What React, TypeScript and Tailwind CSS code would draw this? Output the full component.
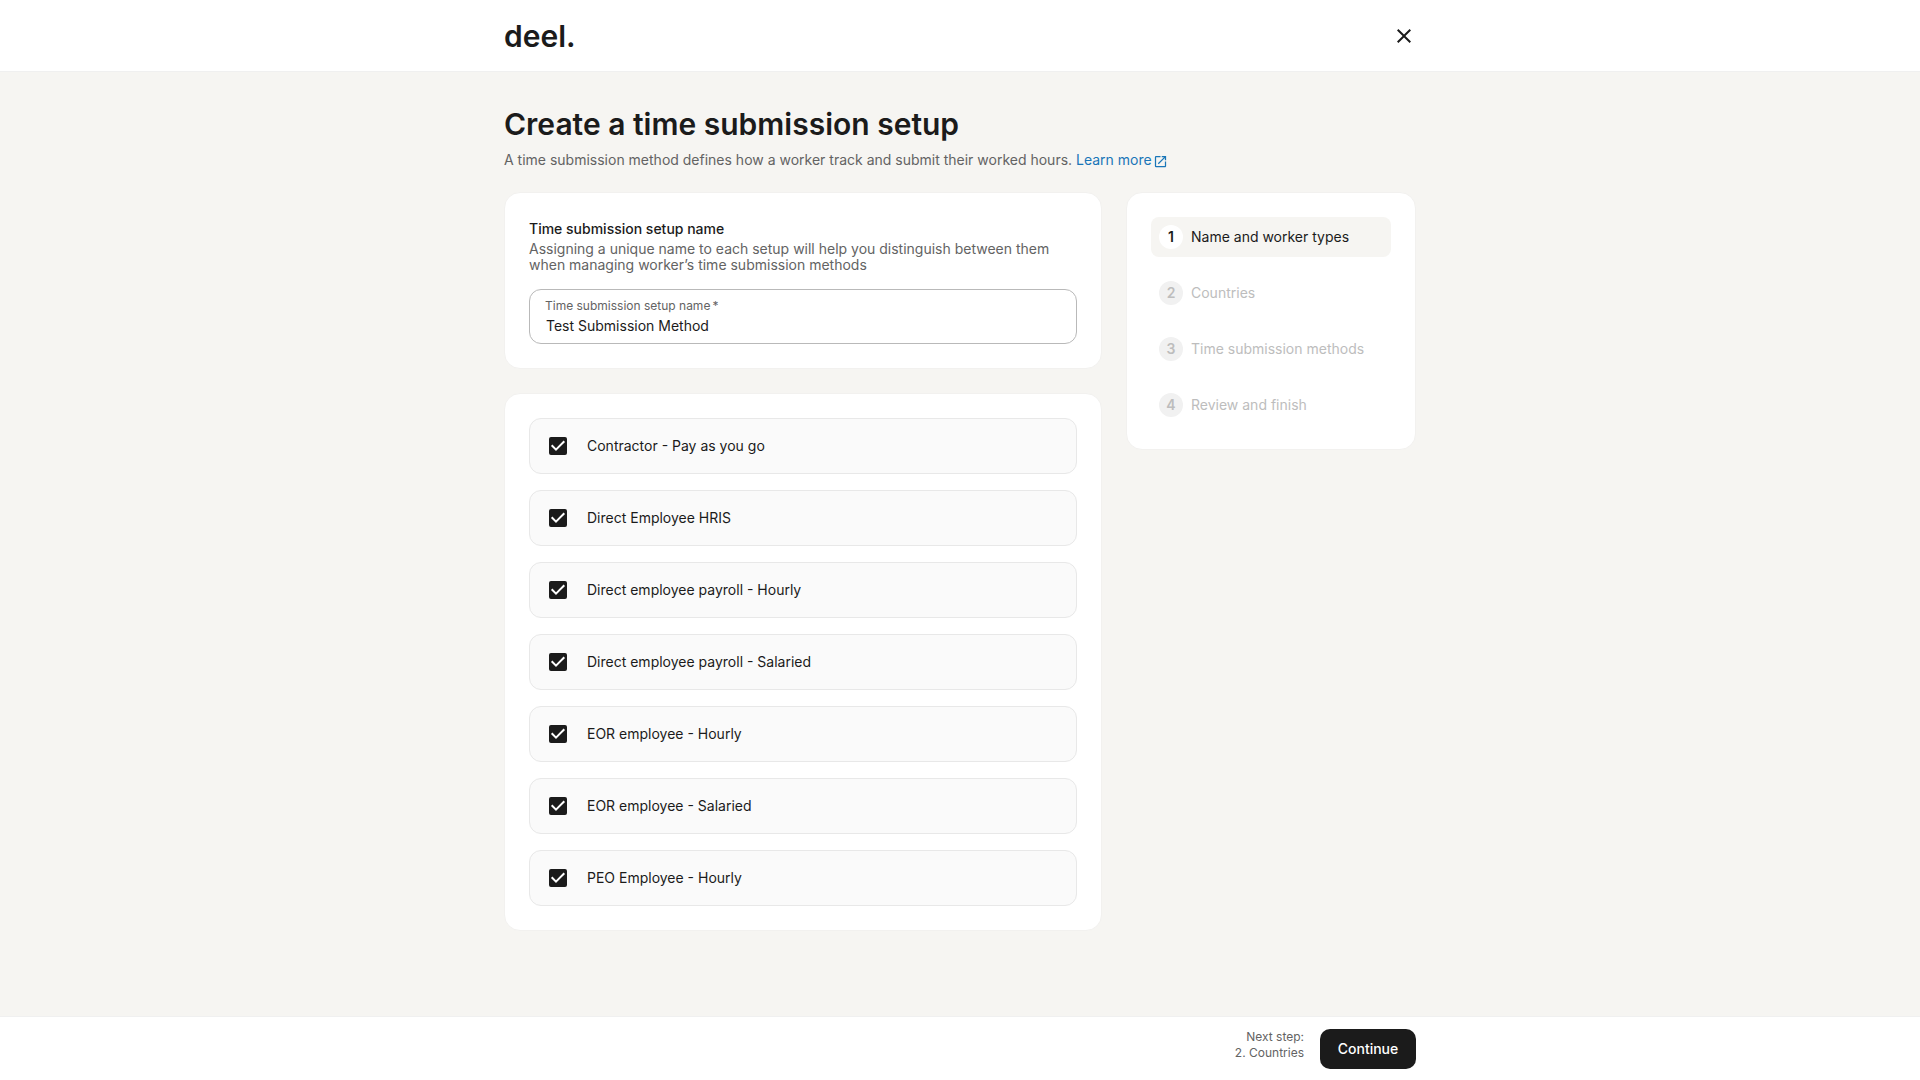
import { useState } from "react";
import { MdClose, MdOpenInNew } from "react-icons/md";

const WORKER_TYPES = [
  "Contractor - Pay as you go",
  "Direct Employee HRIS",
  "Direct employee payroll - Hourly",
  "Direct employee payroll - Salaried",
  "EOR employee - Hourly",
  "EOR employee - Salaried",
  "PEO Employee - Hourly",
];

const STEPS = [
  "Name and worker types",
  "Countries",
  "Time submission methods",
  "Review and finish",
];

export default function App() {
  const [name, setName] = useState("Test Submission Method");
  const [selected, setSelected] = useState<string[]>(WORKER_TYPES);
  const step = 0;

  function toggle(type: string) {
    setSelected((prev) =>
      prev.includes(type) ? prev.filter((t) => t !== type) : [...prev, type]
    );
  }

  return (
    <div className="flex min-h-screen flex-col bg-[#f6f5f2] font-['Inter',sans-serif] text-sm text-[#1b1b1b]">
      <header className="border-b border-[#f0f0f0] bg-white">
        <div className="mx-auto flex h-[71px] max-w-[960px] items-center justify-between px-6">
          <a href="#" className="text-3xl leading-8 font-semibold">
            deel.
          </a>
          <button type="button" aria-label="Close">
            <MdClose className="size-6" />
          </button>
        </div>
      </header>

      <main className="mx-auto w-full max-w-[960px] flex-1 px-6 pt-8 pb-12">
        <h1 className="text-3xl leading-10 font-semibold">
          Create a time submission setup
        </h1>
        <p className="mt-1 mb-5 leading-6 text-[#636363]">
          A time submission method defines how a worker track and submit their
          worked hours.{" "}
          <a href="#" className="text-[#1976b8]">
            Learn more
            <MdOpenInNew className="ml-px inline size-[15px]" />
          </a>
        </p>

        <div className="flex items-start gap-6">
          <div className="flex-1 space-y-6">
            <Card>
              <h2 className="leading-6 font-medium">
                Time submission setup name
              </h2>
              <p className="leading-4 text-[#636363]">
                Assigning a unique name to each setup will help you distinguish
                between them when managing worker’s time submission methods
              </p>
              <label className="mt-4 block rounded-xl border border-[#b9b9b9] px-[15px] pt-2 pb-[5px]">
                <span className="block text-xs leading-4 text-[#636363]">
                  Time submission setup name
                  <span className="ml-0.5">*</span>
                </span>
                <input
                  className="block w-full pl-px leading-6 outline-none"
                  value={name}
                  onChange={(e) => setName(e.target.value)}
                  required
                />
              </label>
            </Card>

            <Card>
              <div className="space-y-4">
                {WORKER_TYPES.map((type) => (
                  <WorkerType
                    key={type}
                    label={type}
                    checked={selected.includes(type)}
                    onChange={() => toggle(type)}
                  />
                ))}
              </div>
            </Card>
          </div>

          <aside className="w-[290px]">
            <Card>
              <ol className="space-y-4">
                {STEPS.map((label, i) => (
                  <Step
                    key={label}
                    index={i + 1}
                    label={label}
                    active={i === step}
                  />
                ))}
              </ol>
            </Card>
          </aside>
        </div>
      </main>

      <footer className="border-t border-[#f0f0f0] bg-white">
        <div className="mx-auto flex max-w-[960px] items-start justify-end gap-4 px-6 pt-3 pb-[11px]">
          <p className="text-right text-xs leading-4 text-[#636363]">
            Next step:
            <br />
            {step + 2}. {STEPS[step + 1]}
          </p>
          <button
            type="button"
            className="h-10 w-24 rounded-[10px] bg-[#1b1b1b] font-medium text-white"
          >
            Continue
          </button>
        </div>
      </footer>
    </div>
  );
}

function Card({ children }: { children: React.ReactNode }) {
  return (
    <section className="rounded-2xl border border-[#f2f1ef] bg-white p-6">
      {children}
    </section>
  );
}

function WorkerType({
  label,
  checked,
  onChange,
}: {
  label: string;
  checked: boolean;
  onChange: () => void;
}) {
  return (
    <label className="flex h-14 items-center gap-5 rounded-xl border border-[#e8e8e8] bg-[#fafafa] px-[19px]">
      <span className="relative size-[18px]">
        <input
          type="checkbox"
          checked={checked}
          onChange={onChange}
          className="peer block size-[18px] appearance-none rounded-xs border-2 border-[#1b1b1b] checked:bg-[#1b1b1b]"
        />
        <svg
          viewBox="0 0 18 18"
          className="pointer-events-none absolute inset-0 hidden size-[18px] peer-checked:block"
        >
          <path
            d="M2.7 8.3 7 12.6 15.3 4.3"
            fill="none"
            stroke="white"
            strokeWidth="2"
          />
        </svg>
      </span>
      {label}
    </label>
  );
}

function Step({
  index,
  label,
  active,
}: {
  index: number;
  label: string;
  active: boolean;
}) {
  return (
    <li
      className={`flex h-10 items-center gap-2 rounded-lg px-2 ${
        active ? "bg-[#f6f5f2]" : "text-[#bdbdbd]"
      }`}
    >
      <span
        className={`flex size-6 items-center justify-center rounded-full font-semibold ${
          active ? "bg-white" : "bg-[#f1f1f1]"
        }`}
      >
        {index}
      </span>
      {label}
    </li>
  );
}
